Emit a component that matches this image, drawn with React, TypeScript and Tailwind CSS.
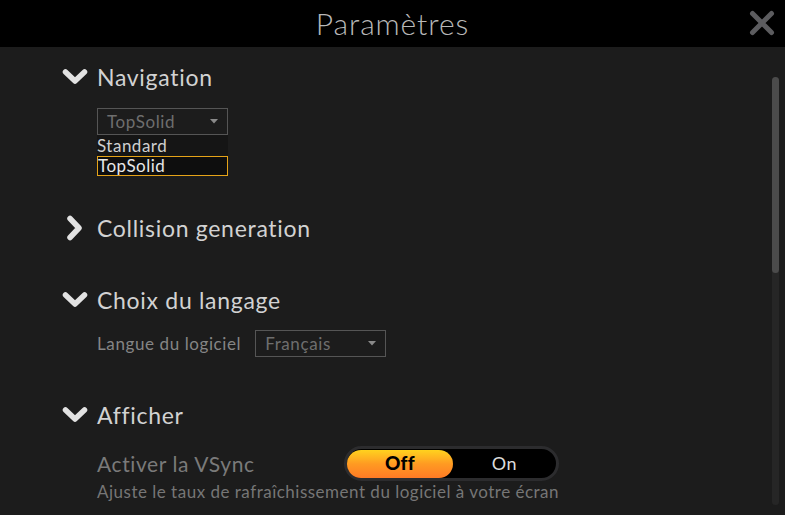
import React from 'react';

const font = { fontFamily: 'Lato, "Open Sans", sans-serif' };

function ChevronDown() {
  return (
    <svg width="26" height="18" viewBox="0 0 26 18" className="shrink-0">
      <path d="M3.5 4 L13 13 L22.5 4" fill="none" stroke="#e2e2e2" strokeWidth="5.5"
        strokeLinecap="round" strokeLinejoin="round" />
    </svg>
  );
}

function ChevronRight() {
  return (
    <svg width="18" height="26" viewBox="0 0 18 26" className="shrink-0">
      <path d="M4 3.5 L13 13 L4 22.5" fill="none" stroke="#e2e2e2" strokeWidth="5.5"
        strokeLinecap="round" strokeLinejoin="round" />
    </svg>
  );
}

function Caret() {
  return (
    <svg width="8" height="5" viewBox="0 0 8 5">
      <path d="M0 0 L8 0 L4 4.5 Z" fill="#8a8a8a" />
    </svg>
  );
}

function Heading({ title, open }: { title: string; open: boolean }) {
  return (
    <div className="flex items-center h-[30px]">
      <div className="w-[35px] flex justify-start">
        {open ? <ChevronDown /> : <div className="pl-[4px]"><ChevronRight /></div>}
      </div>
      <span className="text-[23px] text-[#d2d2d2] tracking-[0.7px]">{title}</span>
    </div>
  );
}

function Select({ value }: { value: string }) {
  return (
    <div className="w-[131px] h-[27px] border border-[#555] flex items-center justify-between pl-[9px] pr-[9px]">
      <span className="text-[17px] text-[#6e6e6e] tracking-[0.6px]">{value}</span>
      <Caret />
    </div>
  );
}

export default function App() {
  return (
    <div className="w-[785px] h-[515px] bg-[#1c1c1c] flex flex-col overflow-hidden" style={font}>
      <header className="h-[47px] bg-black flex items-center justify-center relative shrink-0">
        <h1 className="text-[30px] font-light text-[#b8b8b8] tracking-[0.9px]">Paramètres</h1>
        <button className="absolute right-[10px] top-[10px]">
          <svg width="26" height="26" viewBox="0 0 26 26">
            <path d="M3.5 3.5 L22.5 22.5 M22.5 3.5 L3.5 22.5" stroke="#5c5c5f" strokeWidth="5"
              strokeLinecap="round" />
          </svg>
        </button>
      </header>

      <div className="flex flex-1">
        <main className="flex-1 flex flex-col pl-[62px] pt-[15px]">
          <Heading title="Navigation" open />
          <div className="ml-[35px] mt-[16px] w-[131px]">
            <Select value="TopSolid" />
            <div className="h-[21px] bg-[#151515] flex items-center">
              <span className="text-[17px] text-[#cfcfcf] tracking-[0.5px]">Standard</span>
            </div>
            <div className="h-[20px] bg-[#0e0e0e] border border-[#e5a318] flex items-center">
              <span className="text-[17px] text-[#e8e8e8] tracking-[0.5px]">TopSolid</span>
            </div>
          </div>

          <div className="mt-[37px]">
            <Heading title="Collision generation" open={false} />
          </div>

          <div className="mt-[42px]">
            <Heading title="Choix du langage" open />
          </div>
          <div className="ml-[35px] mt-[15px] flex items-center gap-[14px]">
            <span className="text-[17px] text-[#858585] tracking-[0.6px]">Langue du logiciel</span>
            <Select value="Français" />
          </div>

          <div className="mt-[43px]">
            <Heading title="Afficher" open />
          </div>
          <div className="ml-[35px] mt-[16px] flex items-center">
            <span className="w-[247px] text-[21px] text-[#7a7a7a] tracking-[0.6px]">Activer la VSync</span>
            <div className="w-[215px] h-[35px] rounded-full bg-black border-[3px] border-[#2c2c2e] flex items-center">
              <div className="w-[106px] h-[28px] rounded-full bg-gradient-to-b from-[#ffd21e] via-[#ff9a22] to-[#ff7a25] flex items-center justify-center">
                <span className="text-[19px] font-black text-black tracking-[0.3px]">Off</span>
              </div>
              <div className="flex-1 flex items-center justify-center">
                <span className="text-[18px] text-[#dcdcdc] tracking-[0.5px]">On</span>
              </div>
            </div>
          </div>
          <p className="ml-[35px] mt-[1px] text-[17px] leading-[20px] text-[#767676] tracking-[0.5px] whitespace-nowrap">
            Ajuste le taux de rafraîchissement du logiciel à votre écran
          </p>
        </main>

        <div className="w-[13px] shrink-0 pt-[30px] pb-[10px] pr-[6px]">
          <div className="w-[7px] h-full rounded-full bg-[#262626] flex flex-col">
            <div className="h-[196px] rounded-full bg-[#4b4b4b]" />
          </div>
        </div>
      </div>
    </div>
  );
}
